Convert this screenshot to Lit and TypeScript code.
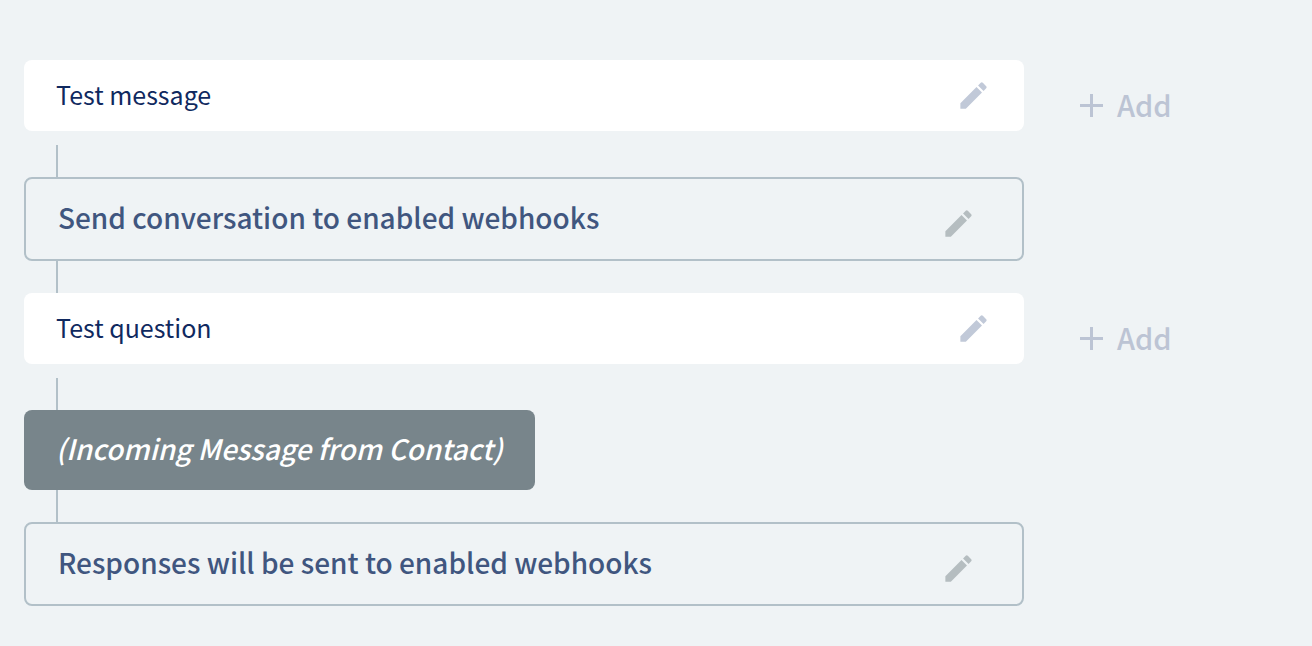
import { LitElement, html, css, nothing } from "lit";
import { customElement, property } from "lit/decorators.js";

type Kind = "message" | "webhook" | "incoming";

interface Step {
  kind: Kind;
  text: string;
}

const STEPS: Step[] = [
  { kind: "message", text: "Test message" },
  { kind: "webhook", text: "Send conversation to enabled webhooks" },
  { kind: "message", text: "Test question" },
  { kind: "incoming", text: "(Incoming Message from Contact)" },
  { kind: "webhook", text: "Responses will be sent to enabled webhooks" },
];

@customElement("flow-step")
export class FlowStep extends LitElement {
  @property() kind: Kind = "message";
  @property() text = "";

  static styles = css`
    :host {
      display: block;
    }
    .row {
      display: grid;
      grid-template-columns: minmax(0, 1fr) 288px;
    }
    .card {
      box-sizing: border-box;
      display: flex;
      align-items: center;
      justify-content: space-between;
      border-radius: 8px;
      padding: 16px 32px;
      line-height: 44px;
    }
    .label {
      padding-bottom: 4px;
    }
    .message {
      min-height: 71px;
      padding: 8px 32px;
      background: #fff;
      color: #10295f;
      font-size: 25px;
    }
    .webhook {
      border: 2px solid #b2c0c8;
      padding-right: 45px;
      color: #40567f;
      font-size: 28px;
      font-weight: 500;
    }
    .incoming {
      justify-self: start;
      background: #78858b;
      color: #fff;
      font-size: 28px;
      font-style: italic;
      font-weight: 500;
    }
    button {
      display: flex;
      align-items: center;
      border: 0;
      padding: 0;
      background: none;
      color: #c1c9d8;
      font: inherit;
      cursor: pointer;
    }
    svg {
      display: block;
      fill: currentColor;
    }
    .edit {
      flex: none;
      padding: 0 1px;
    }
    .webhook .edit {
      padding-top: 8px;
      color: #b5bdc0;
    }
    .add {
      align-self: center;
      justify-self: start;
      gap: 14px;
      margin-left: 56px;
      padding-top: 20px;
      color: #bcc4d4;
      font-size: 29px;
      font-weight: 500;
      line-height: 44px;
    }
  `;

  render() {
    return html`
      <div class="row">
        <div class="card ${this.kind}">
          <span class="label">${this.text}</span>
          ${this.kind === "incoming"
            ? nothing
            : html`<button class="edit" type="button" aria-label="Edit ${this.text}">
                <svg width="35" height="35" viewBox="0 0 24 24" aria-hidden="true">
                  <path
                    d="M3 17.25V21h3.75L17.81 9.94l-3.75-3.75L3 17.25zM20.71 7.04c.39-.39.39-1.02 0-1.41l-2.34-2.34a.996.996 0 0 0-1.41 0l-1.83 1.83 3.75 3.75 1.83-1.83z"
                  />
                </svg>
              </button>`}
        </div>
        ${this.kind === "message"
          ? html`<button class="add" type="button">
              <svg width="23" height="23" viewBox="0 0 23 23" aria-hidden="true">
                <path d="M10 0h3v10h10v3H13v10h-3V13H0v-3h10z" />
              </svg>
              <span class="label">Add</span>
            </button>`
          : nothing}
      </div>
    `;
  }
}

@customElement("app-root")
export class AppRoot extends LitElement {
  static styles = css`
    :host {
      display: block;
      box-sizing: border-box;
      min-height: 100vh;
      padding: 60px 0 40px 24px;
      background: #eff3f5;
      font-family: "Noto Sans CJK SC", "Noto Sans", sans-serif;
    }
    .link {
      width: 2px;
      height: 32px;
      margin-left: 32px;
      background: #b2c0c8;
    }
    .spaced {
      margin-top: 14px;
    }
  `;

  render() {
    return STEPS.map(
      (step, i) => html`
        ${i === 0
          ? nothing
          : html`<div class="link ${STEPS[i - 1].kind === "message" ? "spaced" : ""}"></div>`}
        <flow-step .kind=${step.kind} .text=${step.text}></flow-step>
      `
    );
  }
}
